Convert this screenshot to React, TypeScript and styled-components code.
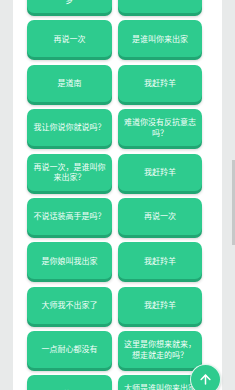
import React, { useLayoutEffect, useRef } from "react"
import styled, { createGlobalStyle } from "styled-components"
import { ArrowUp } from "lucide-react"

const GlobalStyle = createGlobalStyle`
	html, body {
		margin: 0;
		padding: 0;
		background: #e8eaea;
		overflow: hidden;
	}
	* { box-sizing: border-box; }
`

const Page = styled.div`
	display: flex;
	width: 235px;
	height: 390px;
	position: relative;
	font-family: "Noto Sans CJK SC", "Noto Sans", sans-serif;
`

const Gutter = styled.div`
	width: 13px;
	flex: none;
	background: #e8eaea;
	position: relative;
`

const ScrollThumb = styled.div`
	position: absolute;
	right: 0;
	top: 160px;
	width: 3px;
	height: 85px;
	background: #c6c8c8;
`

const Panel = styled.div`
	width: 209px;
	flex: none;
	height: 390px;
	background: #ffffff;
	overflow-y: auto;
	scrollbar-width: none;
	&::-webkit-scrollbar { display: none; }
`

const Grid = styled.div`
	display: grid;
	grid-template-columns: 85px 84px;
	column-gap: 6px;
	row-gap: 7.375px;
	padding: 10px 0 20px 14px;
`

const ReplyButton = styled.button`
	height: 37px;
	border: none;
	border-radius: 7px;
	background: #2ecb8e;
	box-shadow: 0 3px 0 #21a673, 0 4px 3px rgba(0, 0, 0, 0.18);
	color: #f4fffa;
	font-family: inherit;
	font-size: 8px;
	line-height: 10.4px;
	padding: 0 4px;
	display: flex;
	align-items: center;
	justify-content: center;
	text-align: center;
	cursor: pointer;
	overflow: hidden;
`

const Fab = styled.button`
	position: absolute;
	left: 190px;
	top: 364px;
	width: 31px;
	height: 31px;
	border-radius: 50%;
	border: 1px solid rgba(255, 255, 255, 0.85);
	background: #2ecb8e;
	box-shadow: 0 1px 3px rgba(0, 0, 0, 0.2);
	color: #ffffff;
	display: flex;
	align-items: center;
	justify-content: center;
	padding: 0;
	cursor: pointer;
`

const replies = [
	"你是不是在白日做美梦", "再说一次",
	"再说一次", "是谁叫你来出家",
	"是道南", "我赶羚羊",
	"我让你说你就说吗？", "难道你没有反抗意志吗？",
	"再说一次，是谁叫你来出家？", "我赶羚羊",
	"不说话装高手是吗？", "再说一次",
	"是你娘叫我出家", "我赶羚羊",
	"大师我不出家了", "我赶羚羊",
	"一点耐心都没有", "这里是你想来就来，想走就走的吗？",
	"再说一次", "大师是谁叫你来出家的？",
	"是道南", "我赶羚羊",
]

export default function App() {
	const panelRef = useRef<HTMLDivElement>(null)

	useLayoutEffect(() => {
		if (panelRef.current) panelRef.current.scrollTop = 34
	}, [])

	return (
		<>
			<GlobalStyle />
			<Page>
				<Gutter />
				<Panel ref={panelRef}>
					<Grid>
						{replies.map((text, i) => (
							<ReplyButton key={i}>{text}</ReplyButton>
						))}
					</Grid>
				</Panel>
				<Gutter>
					<ScrollThumb />
				</Gutter>
				<Fab aria-label="回到顶部">
					<ArrowUp size={15} strokeWidth={2.4} />
				</Fab>
			</Page>
		</>
	)
}
